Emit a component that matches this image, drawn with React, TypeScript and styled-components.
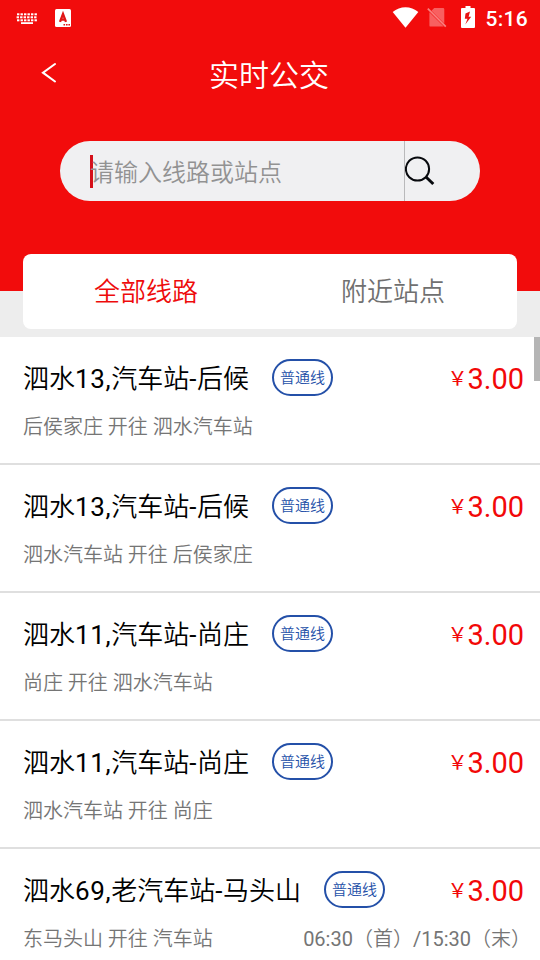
import React from "react";
import styled, { createGlobalStyle } from "styled-components";

const GlobalStyle = createGlobalStyle`
  * { box-sizing: border-box; }
  html, body { margin: 0; padding: 0; overflow: hidden; }
  body { font-family: Roboto, "Noto Sans CJK SC", sans-serif; background: #fff; }
`;

const Screen = styled.main`
  width: 540px;
  height: 960px;
  overflow: hidden;
  display: flex;
  flex-direction: column;
  background: #ededed;
`;

const Header = styled.header`
  flex: none;
  height: 291px;
  background: #f20c0c;
  color: #fff;
`;

const StatusBar = styled.div`
  height: 36px;
  padding: 0 12px 0 16px;
  display: flex;
  align-items: center;
  justify-content: space-between;
`;

const StatusGroup = styled.div`
  display: flex;
  align-items: center;
  height: 36px;
  svg { display: block; }
`;

const SystemIcons = styled.div`
  display: flex;
  align-items: center;
  padding-bottom: 2px;
`;

const Clock = styled.span`
  font-size: 21px;
  font-weight: 500;
  line-height: 36px;
  margin: 2px 0 0 11px;
  letter-spacing: 0.3px;
`;

const TitleBar = styled.div`
  height: 75px;
  padding: 0 41px 0 39px;
  display: grid;
  grid-template-columns: 60px 1fr 60px;
  align-items: center;
`;

const BackButton = styled.button`
  border: 0;
  padding: 0;
  margin: 0 0 2px 1px;
  background: none;
  color: #fff;
  width: 20px;
  height: 24px;
  svg { display: block; }
`;

const Title = styled.h1`
  margin: 0;
  padding-bottom: 2px;
  text-align: center;
  font-family: "Noto Sans CJK SC DemiLight", "Noto Sans CJK SC", sans-serif;
  font-size: 30px;
  font-weight: 350;
  line-height: 42px;
`;

const SearchBox = styled.div`
  width: 420px;
  height: 60px;
  margin: 30px auto 0;
  border-radius: 30px;
  background: #f0f0f2;
  display: flex;
  align-items: center;
  overflow: hidden;
`;

const Caret = styled.span`
  width: 3px;
  height: 33px;
  margin: 0 -3px 0 30px;
  background: #d5101a;
`;

const Placeholder = styled.span`
  flex: 1;
  font-family: "Noto Sans CJK SC DemiLight", "Noto Sans CJK SC", sans-serif;
  font-size: 24px;
  font-weight: 350;
  line-height: 36px;
  color: #929292;
`;

const SearchButton = styled.button`
  width: 76px;
  height: 60px;
  padding: 0;
  border: 0;
  border-left: 1px solid #b9b9bb;
  background: none;
  display: flex;
  align-items: center;
`;

const Tabs = styled.nav`
  flex: none;
  height: 75px;
  margin: -37px 23px 8px;
  border-radius: 8px;
  background: #fff;
  display: grid;
  grid-template-columns: 1fr 1fr;
`;

const Tab = styled.button<{ $active?: boolean }>`
  border: 0;
  padding: 2px 1px 0 0;
  background: none;
  font: inherit;
  font-size: 26px;
  font-weight: 350;
  line-height: 73px;
  color: ${(p) => (p.$active ? "#ee0b0b" : "#707070")};
`;

const ListArea = styled.section`
  flex: 1;
  min-height: 0;
  display: flex;
  align-items: flex-start;
  background: #fff;
`;

const List = styled.ul`
  list-style: none;
  margin: 0 -6px 0 0;
  padding: 0;
  width: 540px;
  flex: none;
`;

const ScrollThumb = styled.div`
  width: 6px;
  height: 44px;
  flex: none;
  background: #b5b5b5;
`;

const Row = styled.li`
  height: 128px;
  padding: 22px 16px 0 23px;
  border-bottom: 2px solid #dfdfdf;
`;

const RowTop = styled.div`
  display: flex;
  align-items: center;
  height: 37px;
`;

const RouteName = styled.span`
  padding-top: 4px;
  font-size: 26px;
  font-weight: 350;
  line-height: 37px;
  color: #000;
  white-space: nowrap;
`;

const Latin = styled.span<{ $spacing: number }>`
  font-weight: 400;
  letter-spacing: ${(p) => p.$spacing}px;
`;

const Badge = styled.span`
  width: 61px;
  height: 37px;
  margin-left: 23px;
  border: 2px solid #2450a8;
  border-radius: 19px;
  color: #2450a8;
  font-size: 15px;
  font-weight: 350;
  line-height: 35px;
  text-align: center;
`;

const Price = styled.span`
  margin-left: auto;
  padding-top: 4px;
  display: flex;
  align-items: center;
  color: #f20808;
  font-size: 29px;
  line-height: 37px;
`;

const Yen = styled.span`
  font-family: "Noto Sans CJK SC", sans-serif;
  font-size: 20px;
  padding-bottom: 4px;
`;

const RowBottom = styled.div`
  margin: 16px -7px 0 0;
  display: flex;
  justify-content: space-between;
  font-size: 20px;
  font-weight: 350;
  line-height: 30px;
  color: #757575;
  white-space: nowrap;
`;

const routes = [
  { name: "泗水13,汽车站-后候", way: "后侯家庄 开往 泗水汽车站" },
  { name: "泗水13,汽车站-后候", way: "泗水汽车站 开往 后侯家庄" },
  { name: "泗水11,汽车站-尚庄", way: "尚庄 开往 泗水汽车站" },
  { name: "泗水11,汽车站-尚庄", way: "泗水汽车站 开往 尚庄" },
  { name: "泗水69,老汽车站-马头山", way: "东马头山 开往 汽车站", hours: "06:30（首）/15:30（末）" },
];

const KeyboardSlot = styled.span`
  padding-top: 2px;
`;

const KeyboardIcon = () => (
  <svg width="22" height="12" viewBox="0 0 22 12" fill="#fff">
    {[0, 3, 6].map((y, r) =>
      [0, 1, 2, 3, 4, 5].map((c) => (
        <rect key={`${y}-${c}`} x={1 + c * 3.5 + (r === 1 ? -0.4 : 0)} y={y + 0.3} width="2.4" height="2" />
      ))
    )}
    <rect x="5" y="9.2" width="12" height="1.8" />
  </svg>
);

const InputIcon = () => (
  <svg width="16" height="18" viewBox="0 0 16 18">
    <rect width="16" height="18" rx="1.5" fill="#fff" />
    <path d="M5 12.900 8 5l3 7.900M5.800 10.600h4.400" fill="none" stroke="#e01515" strokeWidth="2.300" />
    <path d="M8.5 15h1.6v1.5H8.5zM11 15h1.6v1.5H11zM13.4 15H15v1.5h-1.6z" fill="#e01515" />
  </svg>
);

const InputIconSlot = styled.span`
  margin-left: 17px;
`;

const WifiIcon = () => (
  <svg width="27" height="21" viewBox="0 0 27 21" fill="#fff">
    <path d="M.7 5C8-1.4 19-1.4 26.3 5L13.5 20.7z" />
  </svg>
);

const NoSimSlot = styled.span`
  margin: 1px 0 0 8px;
`;

const NoSimIcon = () => (
  <svg width="20" height="21" viewBox="0 0 20 21">
    <path d="M7.2 1H16a1.3 1.3 0 0 1 1.3 1.3v14.200L4.500 3.700zM2.4 5.200 16.800 19.6H3.6a1.2 1.2 0 0 1-1.2-1.2z" fill="#f86060" />
    <path d="M.8 1.6 18.8 19.6" stroke="#f98080" strokeWidth="1.700" />
  </svg>
);

const BatterySlot = styled.span`
  margin-left: 14px;
  margin-right: -1px;
`;

const BatteryIcon = () => (
  <svg width="14" height="22" viewBox="0 0 14 22">
    <path d="M4.5 0h5v2H13a1 1 0 0 1 1 1v18a1 1 0 0 1-1 1H1a1 1 0 0 1-1-1V3a1 1 0 0 1 1-1h3.500z" fill="#fff" />
    <path d="M9 5.500 4.500 7.500 3.800 12.700h2.700L4.300 18.500l5.900-7.700H7.600z" fill="#e81212" />
  </svg>
);

const mixedText = (text: string, spacing = 0) =>
  text
    .split(/([\x21-\x7e]+)/)
    .map((part, i) => (i % 2 ? <Latin key={i} $spacing={spacing}>{part}</Latin> : part));

export default function App() {
  return (
    <Screen>
      <GlobalStyle />
      <Header>
        <StatusBar>
          <StatusGroup>
            <KeyboardSlot><KeyboardIcon /></KeyboardSlot>
            <InputIconSlot><InputIcon /></InputIconSlot>
          </StatusGroup>
          <StatusGroup>
            <SystemIcons>
              <WifiIcon />
              <NoSimSlot><NoSimIcon /></NoSimSlot>
              <BatterySlot><BatteryIcon /></BatterySlot>
            </SystemIcons>
            <Clock>5:16</Clock>
          </StatusGroup>
        </StatusBar>
        <TitleBar>
          <BackButton aria-label="返回">
            <svg width="20" height="22" viewBox="0 0 20 22" fill="none" stroke="#fff" strokeWidth="2.100" strokeLinecap="round">
              <path d="M15 2 3 10.700 15 19.500" />
            </svg>
          </BackButton>
          <Title>实时公交</Title>
        </TitleBar>
        <SearchBox>
          <Caret />
          <Placeholder>请输入线路或站点</Placeholder>
          <SearchButton aria-label="搜索">
            <svg width="31" height="30" viewBox="0 0 31 30" fill="none" stroke="#080a0e">
              <circle cx="12.500" cy="13" r="11.600" strokeWidth="2" />
              <path d="M21 21 28.300 28" strokeWidth="3" />
            </svg>
          </SearchButton>
        </SearchBox>
      </Header>
      <Tabs>
        <Tab $active>全部线路</Tab>
        <Tab>附近站点</Tab>
      </Tabs>
      <ListArea>
        <List>
          {routes.map((r, i) => (
            <Row key={i}>
              <RowTop>
                <RouteName>{mixedText(r.name, 0.6)}</RouteName>
                <Badge>普通线</Badge>
                <Price><Yen>￥</Yen>3.00</Price>
              </RowTop>
              <RowBottom>
                <span>{r.way}</span>
                {r.hours && <span>{mixedText(r.hours)}</span>}
              </RowBottom>
            </Row>
          ))}
        </List>
        <ScrollThumb />
      </ListArea>
    </Screen>
  );
}
